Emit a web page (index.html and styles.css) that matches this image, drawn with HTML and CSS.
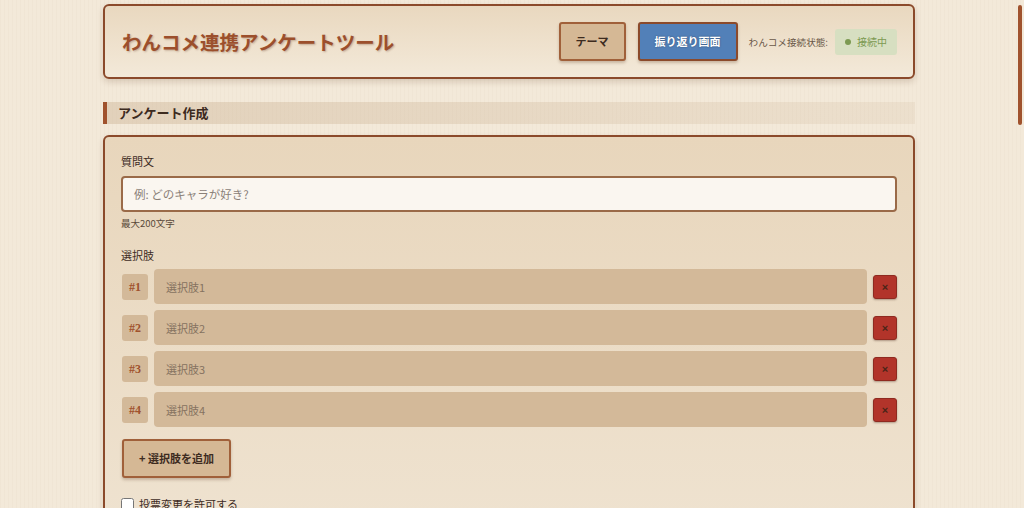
FILE: index.html
```html
<!DOCTYPE html>
<html lang="ja">
<head>
    <meta charset="UTF-8">
    <meta name="viewport" content="width=device-width, initial-scale=1.0">
    <title>わんコメ連携アンケートツール</title>
    <link rel="stylesheet" href="styles.css">
</head>
<body>
    <div class="container">
        <header class="header">
            <h1 class="title">わんコメ連携アンケートツール</h1>
            <div class="header-actions">
                <button class="btn btn-theme">テーマ</button>
                <button class="btn btn-review">振り返り画面</button>
                <div class="status">
                    <span class="status-label">わんコメ接続状態:</span>
                    <span class="status-badge"><span class="status-dot"></span>接続中</span>
                </div>
            </div>
        </header>

        <h2 class="section-title">アンケート作成</h2>

        <div class="card">
            <div class="field">
                <label class="field-label">質問文</label>
                <input type="text" class="question-input" placeholder="例: どのキャラが好き?">
                <div class="field-help">最大200文字</div>
            </div>

            <div class="field">
                <label class="field-label field-label-options">選択肢</label>
                <div class="options">
                    <div class="option-row">
                        <span class="option-num">#1</span>
                        <input type="text" class="option-input" placeholder="選択肢1">
                        <button class="option-remove">×</button>
                    </div>
                    <div class="option-row">
                        <span class="option-num">#2</span>
                        <input type="text" class="option-input" placeholder="選択肢2">
                        <button class="option-remove">×</button>
                    </div>
                    <div class="option-row">
                        <span class="option-num">#3</span>
                        <input type="text" class="option-input" placeholder="選択肢3">
                        <button class="option-remove">×</button>
                    </div>
                    <div class="option-row">
                        <span class="option-num">#4</span>
                        <input type="text" class="option-input" placeholder="選択肢4">
                        <button class="option-remove">×</button>
                    </div>
                </div>
                <button class="btn btn-add">+ 選択肢を追加</button>
            </div>

            <label class="check-row"><input type="checkbox"> 投票変更を許可する</label>
            <label class="check-row"><input type="checkbox" checked> 結果をリアルタイムで表示する</label>

            <button class="btn btn-start">アンケート開始</button>
        </div>

        <h2 class="section-title">実施中のアンケート</h2>
        <div class="card card-empty">現在実施中のアンケートはありません</div>

        <h2 class="section-title">履歴</h2>
        <div class="card card-history">履歴はまだありません</div>
    </div>

    <!-- スクロールバーのつまみ -->
    <div class="scroll-thumb"></div>
</body>
</html>
```

FILE: styles.css
```css
html {
    background-color: #f3e9d9;
}

body {
    margin: 0;
    padding-right: 6px;
    font-family: "Noto Sans CJK JP", sans-serif;
    font-size: 11px;
    color: #3d2b1f;
    background-color: #f3e9d9;
    background-image: repeating-linear-gradient(90deg, rgba(120, 80, 40, 0.025) 0 1px, transparent 1px 4px);
}

.scroll-thumb {
    position: fixed;
    top: 5px;
    right: 2px;
    width: 4px;
    height: 120px;
    border-radius: 2px;
    background-color: #a0522d;
}

.container {
    width: 812px;
    margin: 0 auto;
    padding: 4px 0 40px;
}

/* ヘッダー */
.header {
    display: flex;
    align-items: center;
    justify-content: space-between;
    height: 75px;
    box-sizing: border-box;
    padding: 0 16px 0 17px;
    border: 2px solid #8b4a2b;
    border-radius: 6px;
    background: linear-gradient(180deg, #e9d8bf 0%, #f3e9d9 100%);
    box-shadow: 0 3px 6px rgba(90, 50, 20, 0.18);
}

.title {
    margin: 0;
    font-size: 19.5px;
    font-weight: bold;
    color: #9c4f2c;
    text-shadow: 1px 1px 2px rgba(90, 40, 10, 0.3);
}

.header-actions {
    display: flex;
    align-items: center;
    gap: 12px;
}

.btn {
    font-family: "Noto Sans CJK JP", sans-serif;
    font-size: 11px;
    font-weight: bold;
    line-height: 35px;
    padding: 0 15px;
    border: 2px solid #a0603a;
    border-radius: 3px;
    cursor: pointer;
    box-shadow: 0 2px 3px rgba(80, 40, 10, 0.25);
}

.btn-theme {
    background-color: #d5b895;
    color: #3d2b1f;
}

.btn-review {
    background-color: #5280b8;
    border-color: #8b4a2b;
    color: #fff;
    text-shadow: 0 0 2px rgba(0, 0, 0, 0.4);
}

.status {
    display: flex;
    align-items: center;
    gap: 7px;
    margin-left: -1px;
}

.status-label {
    font-size: 9.6px;
    color: #6a5848;
}

.status-badge {
    display: flex;
    align-items: center;
    gap: 6px;
    height: 26px;
    padding: 0 10px;
    border-radius: 3px;
    background-color: #d7dfc1;
    color: #7d9a52;
    font-size: 10px;
}

.status-dot {
    width: 6px;
    height: 6px;
    border-radius: 50%;
    background-color: #7d9a52;
}

/* セクション見出し */
.section-title {
    margin: 23px 0 11px;
    height: 22px;
    line-height: 22px;
    padding-left: 11px;
    border-left: 4px solid #a0522d;
    font-size: 13px;
    font-weight: bold;
    color: #3d2b1f;
    background: linear-gradient(90deg, rgba(205, 180, 150, 0.45) 0%, rgba(205, 180, 150, 0.18) 100%);
}

/* カード */
.card {
    padding: 16px;
    border: 2px solid #8b4a2b;
    border-radius: 6px;
    background: linear-gradient(180deg, #e8d6bc 0%, #f0e5d4 100%);
    box-shadow: 0 3px 6px rgba(90, 50, 20, 0.15);
}

.field-label {
    display: block;
    line-height: 16px;
    margin-bottom: 7px;
    font-size: 11px;
}

.field-label-options {
    margin-top: 17px;
    margin-bottom: 6px;
}

.question-input {
    display: block;
    width: 100%;
    height: 36px;
    box-sizing: border-box;
    padding: 0 11px;
    border: 2px solid #9a6a48;
    border-radius: 4px;
    background-color: #faf6f0;
    font-family: "Noto Sans CJK JP", sans-serif;
    font-size: 11.5px;
    color: #3d2b1f;
}

.question-input::placeholder {
    color: #8a8078;
}

.field-help {
    margin-top: 4px;
    line-height: 14px;
    font-size: 9.5px;
    color: #5a4a3a;
}

.options {
    display: flex;
    flex-direction: column;
    gap: 6px;
}

.option-row {
    display: flex;
    align-items: center;
    gap: 6px;
    height: 35px;
}

.option-num {
    width: 26px;
    height: 26px;
    margin-left: 1px;
    line-height: 26px;
    text-align: center;
    border-radius: 3px;
    background-color: #d3b999;
    color: #a0522d;
    font-family: "Liberation Serif", serif;
    font-size: 12px;
    font-weight: bold;
}

.option-input {
    flex: 1;
    height: 35px;
    box-sizing: border-box;
    padding: 0 12px;
    border: none;
    border-radius: 4px;
    background-color: #d3b999;
    font-family: "Noto Sans CJK JP", sans-serif;
    font-size: 11px;
    color: #3d2b1f;
}

.option-input::placeholder {
    color: #857260;
}

.option-remove {
    width: 24px;
    height: 24px;
    padding: 0;
    border: 1px solid #8f2a20;
    border-radius: 3px;
    background-color: #b2342a;
    color: #4a2418;
    font-size: 11px;
    font-weight: bold;
    line-height: 20px;
    cursor: pointer;
    box-shadow: 0 1px 2px rgba(60, 20, 10, 0.35);
}

.btn-add {
    display: block;
    margin: 12px 0 0 1px;
    padding: 0 15px;
    background-color: #d5b895;
    color: #3d2b1f;
}

.check-row {
    display: flex;
    align-items: center;
    gap: 5px;
    margin-top: 18px;
    line-height: 16px;
    font-size: 11px;
}

.check-row + .check-row {
    margin-top: 10px;
}

.check-row input {
    width: 13px;
    height: 13px;
    margin: 0;
}

.btn-start {
    display: block;
    margin-top: 20px;
    background-color: #a0522d;
    color: #fff;
    border-color: #8b4a2b;
}

.card-empty {
    padding: 40px 16px;
    text-align: center;
    color: #6a5848;
}

.card-history {
    min-height: 900px;
    text-align: center;
    color: #6a5848;
}
```
